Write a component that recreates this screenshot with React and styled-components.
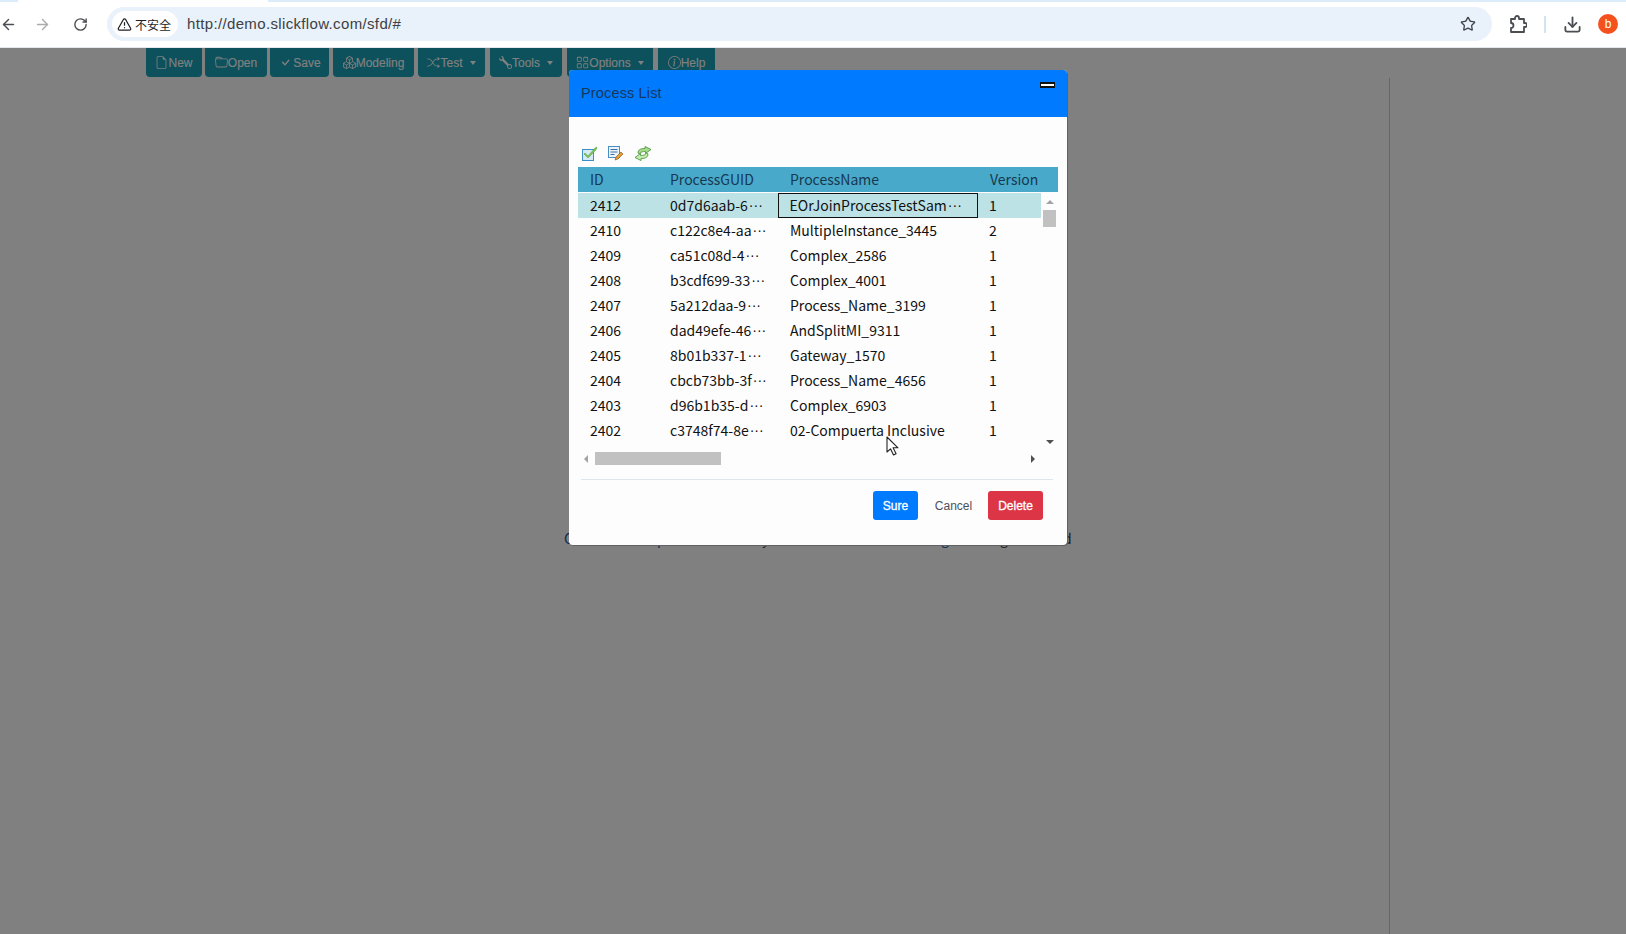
import styled, { createGlobalStyle } from "styled-components";
import { ArrowLeft, ArrowRight, RotateCw, Star, Download, TriangleAlert } from "lucide-react";
import { BsFileEarmark, BsFolder, BsCheck, BsBoxes, BsShuffle, BsWrench, BsGrid, BsInfoCircle } from "react-icons/bs";

const GlobalStyle = createGlobalStyle`
    html, body {
        margin: 0;
        height: 100%;
        overflow: hidden;
        font-family: "Liberation Sans", Arial, sans-serif;
    }
`;

const Screen = styled.div`
    position: relative;
    height: 934px;
    display: flex;
    flex-direction: column;
    background: #808080;
    overflow: hidden;
`;

const Browser = styled.div`
    height: 48px;
    flex-shrink: 0;
    box-sizing: border-box;
    padding-top: 7px;
    display: flex;
    align-items: flex-start;
    background: linear-gradient(90deg, #dcecfa 18px, #fff 18px, #fff 268px, #dcecfa 268px) top / 100% 2px no-repeat, #fff;
    border-bottom: 1px solid #e3e6ea;
`;

const NavButton = styled.div`
    width: ${(p) => p.$w}px;
    height: 34px;
    flex-shrink: 0;
    display: flex;
    align-items: center;
    justify-content: center;
    color: ${(p) => p.$color || "#4a4d51"};
`;

const Omnibox = styled.div`
    width: 1385px;
    height: 34px;
    flex-shrink: 0;
    box-sizing: border-box;
    margin-left: 14px;
    padding: 0 16px 0 5px;
    display: flex;
    align-items: center;
    background: #e9f1fa;
    border-radius: 17px;
`;

const Insecure = styled.div`
    height: 26px;
    padding: 0 7px 0 5px;
    display: flex;
    align-items: center;
    gap: 3px;
    background: #fff;
    border-radius: 13px;
    font-family: "Noto Sans CJK SC", sans-serif;
    font-size: 12px;
    color: #1f1f1f;
`;

const Url = styled.div`
    flex: 1;
    margin-left: 9px;
    padding-bottom: 2px;
    font-size: 15px;
    letter-spacing: 0.35px;
    color: #3c4043;
`;

const Divider = styled.div`
    width: 2px;
    height: 17px;
    margin: 9px 16px 0 0;
    background: #d3e3f1;
`;

const Avatar = styled.div`
    width: 20px;
    height: 20px;
    margin: 7px 0 0 16px;
    border-radius: 50%;
    background: #f4511e;
    color: #fff;
    font-size: 12px;
    display: flex;
    align-items: center;
    justify-content: center;
`;

const Toolbar = styled.div`
    height: 29px;
    flex-shrink: 0;
    padding-left: 146px;
    display: flex;
    gap: 3px;
`;

const ToolButton = styled.div`
    width: ${(p) => p.$w}px;
    margin-left: ${(p) => p.$ml || 0}px;
    box-sizing: border-box;
    display: flex;
    align-items: center;
    justify-content: center;
    background: #0c515c;
    border-radius: 0 0 4px 4px;
    color: #808080;
    font-size: 12px;
    -webkit-text-stroke: 0.2px #808080;
    &::after {
        content: ${(p) => (p.$caret ? '""' : "none")};
        margin-left: 7px;
        border-top: 4px solid #808080;
        border-left: 3.5px solid transparent;
        border-right: 3.5px solid transparent;
    }
`;

const Workspace = styled.div`
    flex: 1;
    display: flex;
    justify-content: flex-end;
    padding-top: 1px;
`;

const SidePanel = styled.div`
    width: 236px;
    border-left: 1px solid #666;
`;

const BehindText = styled.div`
    position: absolute;
    left: 564px;
    top: 528px;
    display: flex;
    font-family: "Noto Sans CJK SC", sans-serif;
    font-size: 14px;
    line-height: 20px;
`;

const BehindGlyph = styled.span`
    width: ${(p) => p.$w}px;
    color: ${(p) => p.$color || "#0d2a56"};
`;

const Dialog = styled.div`
    position: absolute;
    left: 569px;
    top: 70px;
    width: 498px;
    height: 475px;
    display: flex;
    flex-direction: column;
    background: #fdfdfd;
    border-radius: 4px;
    box-shadow: 1px 1px 0 #5f6163;
    overflow: hidden;
`;

const DialogHeader = styled.div`
    height: 47px;
    flex-shrink: 0;
    box-sizing: border-box;
    padding: 0 12px;
    display: flex;
    justify-content: space-between;
    background: #007bff;
`;

const DialogTitle = styled.div`
    margin-top: 14px;
    font-size: 14.5px;
    line-height: 19px;
    letter-spacing: 0.15px;
    color: #17375e;
`;

const Minimize = styled.div`
    width: 15px;
    height: 6px;
    margin-top: 12px;
    box-sizing: border-box;
    background: #fff;
    border: 2px solid #111;
    border-width: 2px 1px 2px 1px;
`;

const IconBar = styled.div`
    height: 50px;
    flex-shrink: 0;
    box-sizing: border-box;
    padding: 29px 0 0 13px;
    display: flex;
    gap: 10px;
`;

const Grid = styled.div`
    margin-left: 9px;
    width: 480px;
    font-family: "Noto Sans CJK SC", sans-serif;
    font-size: 14px;
`;

const HeaderRow = styled.div`
    height: 25px;
    display: grid;
    grid-template-columns: 80px 120px 200px 1fr;
    align-items: center;
    background: #48a9cb;
    color: #17384d;
    margin-bottom: 1px;
`;

const Cell = styled.div`
    padding-left: ${(p) => p.$pl || 12}px;
    padding-bottom: 2px;
    height: 100%;
    box-sizing: border-box;
    display: flex;
    align-items: center;
    white-space: nowrap;
    border: ${(p) => (p.$focus ? "1.5px solid #111" : "none")};
    ${(p) => p.$focus && "padding-left: 10.5px; padding-bottom: 0.5px;"}
`;

const Dots = styled.span`
    font-family: "Liberation Sans", Arial, sans-serif;
    margin-left: 1px;
`;

const BodyWrap = styled.div`
    display: flex;
`;

const Rows = styled.div`
    width: 463px;
    height: 259px;
    flex-shrink: 0;
`;

const Row = styled.div`
    height: 25px;
    display: grid;
    grid-template-columns: 80px 120px 200px 1fr;
    align-items: center;
    background: ${(p) => (p.$selected ? "#bce2e6" : "transparent")};
    color: #111;
`;

const VScroll = styled.div`
    width: 13px;
    height: 244px;
    margin-left: 2px;
    padding-top: 7px;
    display: flex;
    flex-direction: column;
    align-items: center;
`;

const ArrowUp = styled.div`
    border-bottom: 4px solid #a3a3a3;
    border-left: 4px solid transparent;
    border-right: 4px solid transparent;
`;

const ArrowDown = styled.div`
    margin-top: auto;
    border-top: 4px solid #505050;
    border-left: 4px solid transparent;
    border-right: 4px solid transparent;
`;

const VThumb = styled.div`
    width: 13px;
    height: 17px;
    margin-top: 6px;
    background: #c1c1c1;
`;

const HScroll = styled.div`
    height: 13px;
    margin-left: 6px;
    width: 451px;
    display: flex;
    align-items: center;
`;

const ArrowBack = styled.div`
    border-right: 4px solid #a3a3a3;
    border-top: 4px solid transparent;
    border-bottom: 4px solid transparent;
`;

const ArrowForward = styled.div`
    margin-left: auto;
    border-left: 4px solid #505050;
    border-top: 4px solid transparent;
    border-bottom: 4px solid transparent;
`;

const HThumb = styled.div`
    width: 126px;
    height: 13px;
    margin-left: 7px;
    background: #c1c1c1;
`;

const Separator = styled.div`
    height: 1px;
    margin: 14px 14px 11px 12px;
    background: #dce6ec;
`;

const Actions = styled.div`
    display: flex;
    justify-content: flex-end;
    padding-right: 24px;
    height: 29px;
`;

const ActionButton = styled.div`
    width: ${(p) => p.$w}px;
    padding-left: ${(p) => p.$pl || 0}px;
    box-sizing: border-box;
    display: flex;
    align-items: center;
    justify-content: center;
    border-radius: 3px;
    background: ${(p) => p.$bg || "transparent"};
    color: ${(p) => p.$color || "#fff"};
    font-size: 12px;
    ${(p) => p.$bold && "-webkit-text-stroke: 0.3px #fff;"}
`;

const Cursor = styled.svg`
    position: absolute;
    left: 886px;
    top: 436px;
`;

const rows = [
    ["2412", "0d7d6aab-6", "EOrJoinProcessTestSam", "1", true],
    ["2410", "c122c8e4-aa", "MultipleInstance_3445", "2"],
    ["2409", "ca51c08d-4", "Complex_2586", "1"],
    ["2408", "b3cdf699-33", "Complex_4001", "1"],
    ["2407", "5a212daa-9", "Process_Name_3199", "1"],
    ["2406", "dad49efe-46", "AndSplitMI_9311", "1"],
    ["2405", "8b01b337-1", "Gateway_1570", "1"],
    ["2404", "cbcb73bb-3f", "Process_Name_4656", "1"],
    ["2403", "d96b1b35-d", "Complex_6903", "1"],
    ["2402", "c3748f74-8e", "02-Compuerta Inclusive", "1"],
];

const tools = [
    { label: "New", w: 56, Icon: BsFileEarmark, size: 13 },
    { label: "Open", w: 62, Icon: BsFolder, size: 13 },
    { label: "Save", w: 59, Icon: BsCheck, size: 15 },
    { label: "Modeling", w: 81, ml: 1, Icon: BsBoxes, size: 13 },
    { label: "Test", w: 67, ml: 1, Icon: BsShuffle, size: 13, caret: true },
    { label: "Tools", w: 72, ml: 2, Icon: BsWrench, size: 13, caret: true },
    { label: "Options", w: 86, ml: 2, Icon: BsGrid, size: 13, caret: true },
    { label: "Help", w: 57, ml: 2, Icon: BsInfoCircle, size: 13 },
];

const PuzzleIcon = () => (
    <svg width="18" height="18" viewBox="0 0 18 18" fill="none" stroke="#4a4d51" strokeWidth="1.8" strokeLinejoin="round">
        <path d="M2 4h4V3a2 2 0 0 1 4 0v1h5v4h1a2 2 0 0 1 0 4h-1v5H2v-4a2 2 0 0 0 0-5z" />
    </svg>
);

const CheckIcon = () => (
    <svg width="16" height="15" viewBox="0 0 16 15">
        <rect x="0.5" y="3.5" width="11" height="11" fill="#d8e9f6" stroke="#3d8ec4" />
        <path d="M3 7l3 3 7-8 2-1-1 3-8 8-4-4z" fill="#7cc65a" stroke="#4a9c3a" strokeWidth="0.5" />
    </svg>
);

const EditIcon = () => (
    <svg width="16" height="15" viewBox="0 0 16 15">
        <rect x="0.5" y="0.5" width="11" height="11" fill="#eaf3fb" stroke="#4a8dc0" />
        <path d="M2.5 3.5h7M2.5 6h7M2.5 8.5h4" stroke="#3f6f9f" />
        <path d="M7 14l1-3 5-5 2 2-5 5z" fill="#e0a030" stroke="#8a4b1c" strokeWidth="0.6" />
    </svg>
);

const RefreshIcon = () => (
    <svg width="18" height="15" viewBox="0 0 18 15">
        <path d="M4 7C4 4 6 2.5 11 2.5V0.5L17 3.5 11.5 7.5V5.5C8.5 5.5 6.5 6 5.5 8z" fill="#a8dc8a" stroke="#3f8f33" strokeWidth="0.8" strokeLinejoin="round" />
        <path d="M14 8C14 11 12 12.5 7 12.5V14.5L1 11.5 6.5 7.5V9.5C9.5 9.5 11.5 9 12.5 7z" fill="#c8ebb2" stroke="#3f8f33" strokeWidth="0.8" strokeLinejoin="round" />
    </svg>
);

const App = () => {
    return (
        <Screen>
            <GlobalStyle />
            <Browser>
                <NavButton $w={17}><ArrowLeft size={17} strokeWidth={2} /></NavButton>
                <NavButton $w={51} $color="#a9abad"><ArrowRight size={17} strokeWidth={2} /></NavButton>
                <NavButton $w={25}><RotateCw size={15} strokeWidth={2.2} /></NavButton>
                <Omnibox>
                    <Insecure>
                        <TriangleAlert size={15} strokeWidth={2} />
                        不安全
                    </Insecure>
                    <Url>http://demo.slickflow.com/sfd/#</Url>
                    <Star size={16} strokeWidth={2} color="#3f4448" />
                </Omnibox>
                <NavButton $w={52}><PuzzleIcon /></NavButton>
                <Divider />
                <NavButton $w={20}><Download size={19} strokeWidth={2.3} /></NavButton>
                <Avatar>b</Avatar>
            </Browser>
            <Toolbar>
                {tools.map(({ label, w, ml, Icon, size, caret }) => (
                    <ToolButton key={label} $w={w} $ml={ml} $caret={caret}>
                        <Icon size={size} />
                        {label}
                    </ToolButton>
                ))}
            </Toolbar>
            <Workspace>
                <SidePanel />
            </Workspace>
            <BehindText>
                <BehindGlyph $w={93}>C</BehindGlyph>
                <BehindGlyph $w={105}>p</BehindGlyph>
                <BehindGlyph $w={179} $color="#1c1c1c">y</BehindGlyph>
                <BehindGlyph $w={59}>g</BehindGlyph>
                <BehindGlyph $w={63} $color="#1c1c1c">g</BehindGlyph>
                <BehindGlyph $w={10} $color="#1c1c1c">d</BehindGlyph>
            </BehindText>
            <Dialog>
                <DialogHeader>
                    <DialogTitle>Process List</DialogTitle>
                    <Minimize />
                </DialogHeader>
                <IconBar>
                    <CheckIcon />
                    <EditIcon />
                    <RefreshIcon />
                </IconBar>
                <Grid>
                    <HeaderRow>
                        <Cell>ID</Cell>
                        <Cell>ProcessGUID</Cell>
                        <Cell>ProcessName</Cell>
                        <Cell>Version</Cell>
                    </HeaderRow>
                    <BodyWrap>
                        <Rows>
                            {rows.map((row, i) => (
                                <Row key={row[0]} $selected={i === 0}>
                                    <Cell>{row[0]}</Cell>
                                    <Cell>{row[1]}<Dots>···</Dots></Cell>
                                    <Cell $focus={i === 0}>{row[2]}{row[4] && <Dots>···</Dots>}</Cell>
                                    <Cell $pl={11}>{row[3]}</Cell>
                                </Row>
                            ))}
                        </Rows>
                        <VScroll>
                            <ArrowUp />
                            <VThumb />
                            <ArrowDown />
                        </VScroll>
                    </BodyWrap>
                    <HScroll>
                        <ArrowBack />
                        <HThumb />
                        <ArrowForward />
                    </HScroll>
                </Grid>
                <Separator />
                <Actions>
                    <ActionButton $w={45} $bg="#007bff" $bold>Sure</ActionButton>
                    <ActionButton $w={70} $pl={1} $color="#4b5157">Cancel</ActionButton>
                    <ActionButton $w={55} $bg="#dc3545" $bold>Delete</ActionButton>
                </Actions>
            </Dialog>
            <Cursor width="14" height="21" viewBox="0 0 14 21">
                <path d="M1 1v15l3.5-3.2L7.5 19l2.6-1.2-3-6H12z" fill="#fff" stroke="#222" strokeWidth="1.1" strokeLinejoin="round" />
            </Cursor>
        </Screen>
    );
};

export default App;
